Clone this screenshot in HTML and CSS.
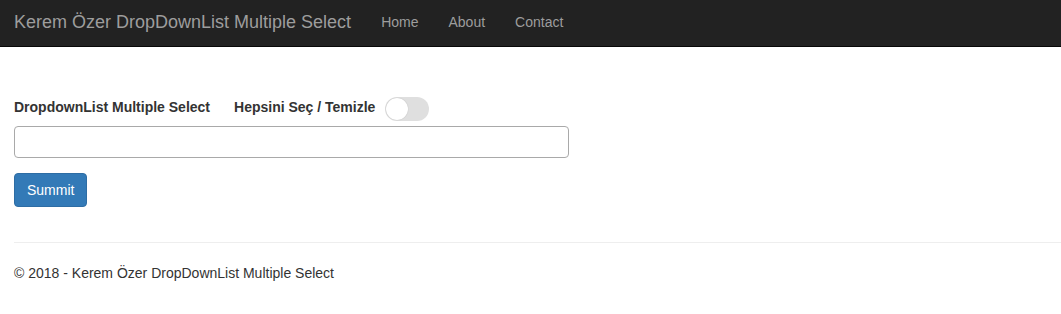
FILE: index.html
```html
<!DOCTYPE html>
<html lang="tr">
<head>
  <meta charset="UTF-8">
  <meta name="viewport" content="width=device-width, initial-scale=1.0">
  <title>Kerem Özer DropDownList Multiple Select</title>
  <link rel="stylesheet" href="styles.css">
</head>
<body>
  <nav class="navbar">
    <a class="brand" href="#">Kerem Özer DropDownList Multiple Select</a>
    <ul class="nav-links">
      <li><a href="#">Home</a></li>
      <li><a href="#">About</a></li>
      <li><a href="#">Contact</a></li>
    </ul>
  </nav>

  <div class="container">
    <div class="label-row">
      <label for="items">DropdownList Multiple Select</label>
      <span class="select-all">Hepsini Seç / Temizle</span>
      <span class="switch"><span class="knob"></span></span>
    </div>
    <input type="text" id="items" class="form-control">
    <button type="button" class="btn-primary">Summit</button>

    <hr>
    <footer>
      <p>&copy; 2018 - Kerem Özer DropDownList Multiple Select</p>
    </footer>
  </div>
</body>
</html>
```

FILE: styles.css
```css
* {
    margin: 0;
    padding: 0;
    box-sizing: border-box;
}

body {
    font-family: 'Liberation Sans', Arial, sans-serif;
    font-size: 14px;
    line-height: 20px;
    color: #333;
    background: #fff;
}

.navbar {
    height: 47px;
    background: #222;
    border-bottom: 1px solid #080808;
    display: flex;
    align-items: flex-start;
    padding: 12px 14px 0;
}

.brand {
    font-size: 18px;
    line-height: 20px;
    color: #9d9d9d;
    text-decoration: none;
    padding-right: 15px;
}

.nav-links {
    list-style: none;
    display: flex;
}

.nav-links a {
    display: block;
    padding: 0 15px;
    color: #9d9d9d;
    text-decoration: none;
}

.container {
    padding: 50px 14px 0;
    display: flex;
    flex-direction: column;
    align-items: flex-start;
}

.label-row {
    display: flex;
    align-items: flex-start;
    height: 24px;
    margin-bottom: 5px;
    font-weight: bold;
}

.select-all {
    margin-left: 24px;
}

.switch {
    display: flex;
    align-items: center;
    width: 44px;
    height: 24px;
    margin-left: 10px;
    padding: 1px;
    border-radius: 12px;
    background: #dfdfdf;
}

.knob {
    width: 22px;
    height: 22px;
    border-radius: 50%;
    background: #fff;
    box-shadow: 0 0 1px rgba(0, 0, 0, 0.25);
}

.form-control {
    width: 555px;
    height: 32px;
    border: 1px solid #a9a9a9;
    border-radius: 4px;
    padding: 6px 12px;
    font-size: 14px;
    font-family: inherit;
}

.btn-primary {
    margin-top: 15px;
    height: 34px;
    padding: 0 12px;
    background: #337ab7;
    border: 1px solid #2e6da4;
    border-radius: 4px;
    color: #fff;
    font-size: 14px;
    font-family: inherit;
}

hr {
    align-self: stretch;
    margin: 35px -14px 0 0;
    border: 0;
    border-top: 1px solid #eee;
}

footer {
    margin-top: 20px;
}
```
